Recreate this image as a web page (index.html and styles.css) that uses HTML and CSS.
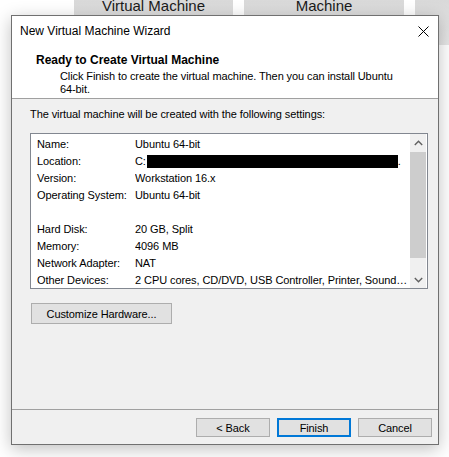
FILE: index.html
```html
<!DOCTYPE html>
<html>
<head>
<meta charset="utf-8">
<link rel="stylesheet" href="styles.css">
</head>
<body>
<div class="tabs">
  <div class="tab t1"><span>Virtual Machine</span></div>
  <div class="tab t2"><span>Machine</span></div>
  <div class="tab t3"></div>
</div>
<div class="dialog">
  <div class="titlebar">
    <span class="title">New Virtual Machine Wizard</span>
    <svg class="close" width="11" height="11" viewBox="0 0 11 11"><path d="M0.5 0.5 L10.5 10.5 M10.5 0.5 L0.5 10.5" stroke="#000" stroke-width="1" fill="none"/></svg>
  </div>
  <div class="header">
    <h1>Ready to Create Virtual Machine</h1>
    <p>Click Finish to create the virtual machine. Then you can install Ubuntu<br>64-bit.</p>
  </div>
  <div class="content">
    <div class="intro">The virtual machine will be created with the following settings:</div>
    <div class="list">
      <div class="rows">
        <div class="row"><span class="k">Name:</span><span class="v">Ubuntu 64-bit</span></div>
        <div class="row"><span class="k">Location:</span><span class="v">C:<span class="redact"></span>.</span></div>
        <div class="row"><span class="k">Version:</span><span class="v">Workstation 16.x</span></div>
        <div class="row"><span class="k">Operating System:</span><span class="v">Ubuntu 64-bit</span></div>
        <div class="row"><span class="k"></span><span class="v"></span></div>
        <div class="row"><span class="k">Hard Disk:</span><span class="v">20 GB, Split</span></div>
        <div class="row"><span class="k">Memory:</span><span class="v">4096 MB</span></div>
        <div class="row"><span class="k">Network Adapter:</span><span class="v">NAT</span></div>
        <div class="row"><span class="k">Other Devices:</span><span class="v">2 CPU cores, CD/DVD, USB Controller, Printer, Sound Card, Display</span></div>
      </div>
      <div class="scrollbar">
        <div class="arrow"><svg width="9" height="6" viewBox="0 0 9 6"><path d="M0.8 5 L4.5 1.3 L8.2 5" stroke="#606060" stroke-width="1.4" fill="none"/></svg></div>
        <div class="track"><div class="thumb"></div></div>
        <div class="arrow"><svg width="9" height="6" viewBox="0 0 9 6"><path d="M0.8 1 L4.5 4.7 L8.2 1" stroke="#606060" stroke-width="1.4" fill="none"/></svg></div>
      </div>
    </div>
    <button class="btn custom">Customize Hardware...</button>
  </div>
  <div class="footer">
    <button class="btn">&lt; Back</button>
    <button class="btn default">Finish</button>
    <button class="btn">Cancel</button>
  </div>
</div>
</body>
</html>
```
FILE: styles.css
```css
html, body {
  margin: 0;
  padding: 0;
}
body {
  width: 449px;
  height: 457px;
  overflow: hidden;
  background: #ffffff;
  position: relative;
  font-family: "Liberation Sans", Arial, sans-serif;
  color: #000;
}
.tabs {
  display: flex;
  padding-left: 74px;
  height: 45px;
}
.tab {
  height: 45px;
  background: linear-gradient(#d9d9d9, #e6e6e6);
  text-align: center;
  font-size: 15px;
  color: #1a1a1a;
  overflow: hidden;
  flex: none;
}
.tab span {
  display: block;
  line-height: 15px;
  margin-top: -2px;
}
.t1 { width: 159px; }
.t2 { width: 160px; margin-left: 11px; }
.t3 { width: 40px; margin-left: 11px; }

.dialog {
  position: absolute;
  left: 11px;
  top: 15px;
  width: 428px;
  height: 430px;
  box-sizing: border-box;
  border: 1px solid #707070;
  background: #f0f0f0;
  display: flex;
  flex-direction: column;
  box-shadow: 0 4px 16px rgba(0, 0, 0, 0.25);
}
.titlebar {
  height: 30px;
  flex: none;
  background: #fff;
  display: flex;
  align-items: center;
  justify-content: space-between;
  padding: 0 9px 0 8px;
  font-size: 12px;
}
.close { display: block; }
.header {
  flex: none;
  background: #fff;
  border-bottom: 1px solid #a0a0a0;
  padding: 6px 0 2px 24px;
}
.header h1 {
  margin: 0;
  font-size: 12px;
  font-weight: bold;
  line-height: 16px;
}
.header p {
  margin: 2px 0 0 24px;
  font-size: 11px;
  line-height: 13px;
  letter-spacing: -0.1px;
}
.content {
  flex: 1;
  padding: 8px 0 0 18px;
  font-size: 11px;
  letter-spacing: -0.08px;
}
.intro {
  line-height: 15px;
}
.list {
  margin-top: 11px;
  width: 398px;
  height: 156px;
  box-sizing: border-box;
  border: 1px solid #828790;
  background: #fff;
  display: flex;
}
.rows {
  flex: 1;
  min-width: 0;
  padding: 2px 0 0 6px;
}
.row {
  display: flex;
  height: 17px;
  line-height: 17px;
}
.k {
  width: 98px;
  flex: none;
}
.v {
  flex: 1;
  min-width: 0;
  white-space: nowrap;
  overflow: hidden;
  text-overflow: ellipsis;
  padding-right: 2px;
}
.redact {
  display: inline-block;
  width: 251px;
  height: 13px;
  background: #000;
  vertical-align: -3px;
  margin-left: 1px;
}
.scrollbar {
  width: 16px;
  margin-right: 1px;
  background: #f0f0f0;
  display: flex;
  flex-direction: column;
}
.arrow {
  height: 17px;
  display: flex;
  align-items: center;
  justify-content: center;
  flex: none;
}
.track {
  flex: 1;
}
.thumb {
  margin-top: 1px;
  height: 106px;
  background: #cdcdcd;
}
.btn {
  font-family: "Liberation Sans", Arial, sans-serif;
  font-size: 11px;
  letter-spacing: -0.1px;
  color: #000;
  background: #e1e1e1;
  border: 1px solid #adadad;
  box-sizing: border-box;
  padding: 0;
  margin: 0;
  display: block;
}
.custom {
  margin: 14px 0 0 1px;
  width: 141px;
  height: 21px;
}
.footer {
  flex: none;
  border-top: 1px solid #a0a0a0;
  padding: 8px 6px 7px 0;
  display: flex;
  justify-content: flex-end;
  gap: 7px;
}
.footer .btn {
  width: 74px;
  height: 19px;
}
.footer .default {
  border: 2px solid #0078d7;
}
```
